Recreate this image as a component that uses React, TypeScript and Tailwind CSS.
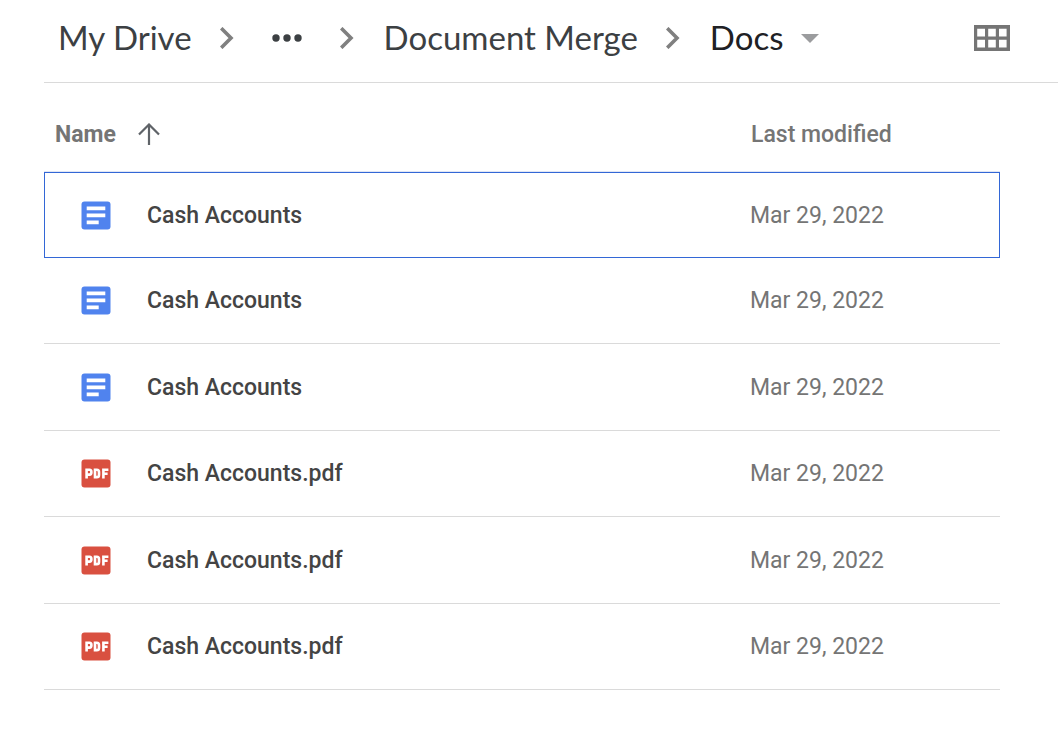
import React from "react";

type FileKind = "doc" | "pdf";

interface FileEntry {
  name: string;
  kind: FileKind;
  modified: string;
}

const files: FileEntry[] = [
  { name: "Cash Accounts", kind: "doc", modified: "Mar 29, 2022" },
  { name: "Cash Accounts", kind: "doc", modified: "Mar 29, 2022" },
  { name: "Cash Accounts", kind: "doc", modified: "Mar 29, 2022" },
  { name: "Cash Accounts.pdf", kind: "pdf", modified: "Mar 29, 2022" },
  { name: "Cash Accounts.pdf", kind: "pdf", modified: "Mar 29, 2022" },
  { name: "Cash Accounts.pdf", kind: "pdf", modified: "Mar 29, 2022" },
];

function Chevron() {
  return (
    <svg className="mr-[30px] ml-7 h-[22px] w-[14px] shrink-0" viewBox="0 0 14 22" fill="none" aria-hidden="true">
      <path d="M1.2 1.2 L11 11 L1.2 20.8" stroke="#808080" strokeWidth="3.6" />
    </svg>
  );
}

function DocIcon() {
  return (
    <svg className="block h-[29px] w-[30px]" viewBox="0 0 30 29" aria-hidden="true">
      <rect x="0.5" y="0.5" width="29" height="28" rx="3" fill="#5083ee" />
      <path d="M5.7 5.6h18.6v3.6H5.7z M5.7 12.6h18.6v3.6H5.7z M5.7 19.6h12v3.6h-12z" fill="#fff" />
    </svg>
  );
}

function PdfIcon() {
  return (
    <svg className="block h-[29px] w-[30px]" viewBox="0 0 30 29" aria-hidden="true">
      <rect x="0.5" y="0.5" width="29" height="28" rx="3" fill="#d95040" />
      <g fill="none" stroke="#fff" strokeWidth="2.6">
        <path d="M5.6 19.4V10.8H8.6Q10.4 10.8 10.4 13.2Q10.4 15.6 8.6 15.6H5.6" />
        <path d="M14 10.8H15.8Q18 10.8 18 13V15.9Q18 18.1 15.8 18.1H14Z" />
        <path d="M22.4 19.4V10.8H27.4M22.4 14.8H26.6" />
      </g>
    </svg>
  );
}

export default function App() {
  return (
    <main className="min-h-screen bg-white pl-11 font-['Roboto',sans-serif] text-[23px] leading-[33px]">
      <header className="flex h-[83px] items-center justify-between border-b border-[#dadada] pr-12 pb-[6px]">
        <nav aria-label="Folder path">
          <ol className="flex items-center pl-[14px] font-['Lato',sans-serif] text-[33px] leading-10 whitespace-nowrap text-[#3c4043]">
            <li className="flex items-center">
              <a href="#my-drive" className="pb-[3px]">My Drive</a>
              <Chevron />
            </li>
            <li className="flex items-center">
              <button type="button" aria-label="Show path" className="pr-[10px] pl-2">
                <svg className="block h-2 w-[30px]" viewBox="0 0 30 8" fill="#3c4043" aria-hidden="true">
                  <circle cx="4" cy="4" r="3.7" />
                  <circle cx="15" cy="4" r="3.7" />
                  <circle cx="26" cy="4" r="3.7" />
                </svg>
              </button>
              <Chevron />
            </li>
            <li className="flex items-center">
              <a href="#document-merge" className="pb-[3px]">Document Merge</a>
              <Chevron />
            </li>
            <li>
              <button type="button" className="flex items-center gap-[18px] text-[#202124]">
                <span className="pb-[3px]">Docs</span>
                <svg className="h-[9px] w-[18px]" viewBox="0 0 18 9" aria-hidden="true">
                  <path d="M0 0H18L9 9Z" fill="#9b9c9e" />
                </svg>
              </button>
            </li>
          </ol>
        </nav>
        <button type="button" aria-label="Grid view">
          <svg className="block h-[26px] w-9" viewBox="0 0 36 26" aria-hidden="true">
            <path
              fillRule="evenodd"
              fill="#757575"
              d="M0 0H36V26H0Z M3.2 3.8V11.4H11V3.8Z M14.2 3.8V11.4H21.8V3.8Z M25 3.8V11.4H32.6V3.8Z M3.2 14.8V22.4H11V14.8Z M14.2 14.8V22.4H21.8V14.8Z M25 14.8V22.4H32.6V14.8Z"
            />
          </svg>
        </button>
      </header>

      <div className="pr-[58px]">
        <table className="w-full table-fixed border-separate border-spacing-0 text-left">
          <thead className="text-[#757575]">
            <tr>
              <th scope="col" className="h-[89px] border-b border-[#e0e6f4] pt-[14px] pl-[11px] font-bold">
                <button type="button" className="flex items-center gap-[22px]">
                  Name
                  <svg className="h-[22px] w-[22px]" viewBox="0 0 22 22" fill="none" aria-hidden="true">
                    <path d="M11 22V2M1 11.5L11 1.5L21 11.5" stroke="#5f6368" strokeWidth="2.2" />
                  </svg>
                </button>
              </th>
              <th scope="col" className="w-[250px] border-b border-[#e0e6f4] pt-[14px] pl-px font-medium">
                Last modified
              </th>
            </tr>
          </thead>
          <tbody>
            {files.map((file, index) => (
              <tr key={index} aria-selected={index === 0} className="group">
                <td className="h-[86px] border-b border-[#dadada] pl-[37px] group-odd:h-[87px] group-first:h-[86px]! group-first:border-y group-first:border-l group-first:border-[#3367d6] group-first:pl-9">
                  <div className="flex items-center gap-9 font-medium text-[#444]">
                    {file.kind === "doc" ? <DocIcon /> : <PdfIcon />}
                    <span>{file.name}</span>
                  </div>
                </td>
                <td className="border-b border-[#dadada] text-[#757575] group-first:border-y group-first:border-r group-first:border-[#3367d6]">
                  {file.modified}
                </td>
              </tr>
            ))}
          </tbody>
        </table>
      </div>
    </main>
  );
}
